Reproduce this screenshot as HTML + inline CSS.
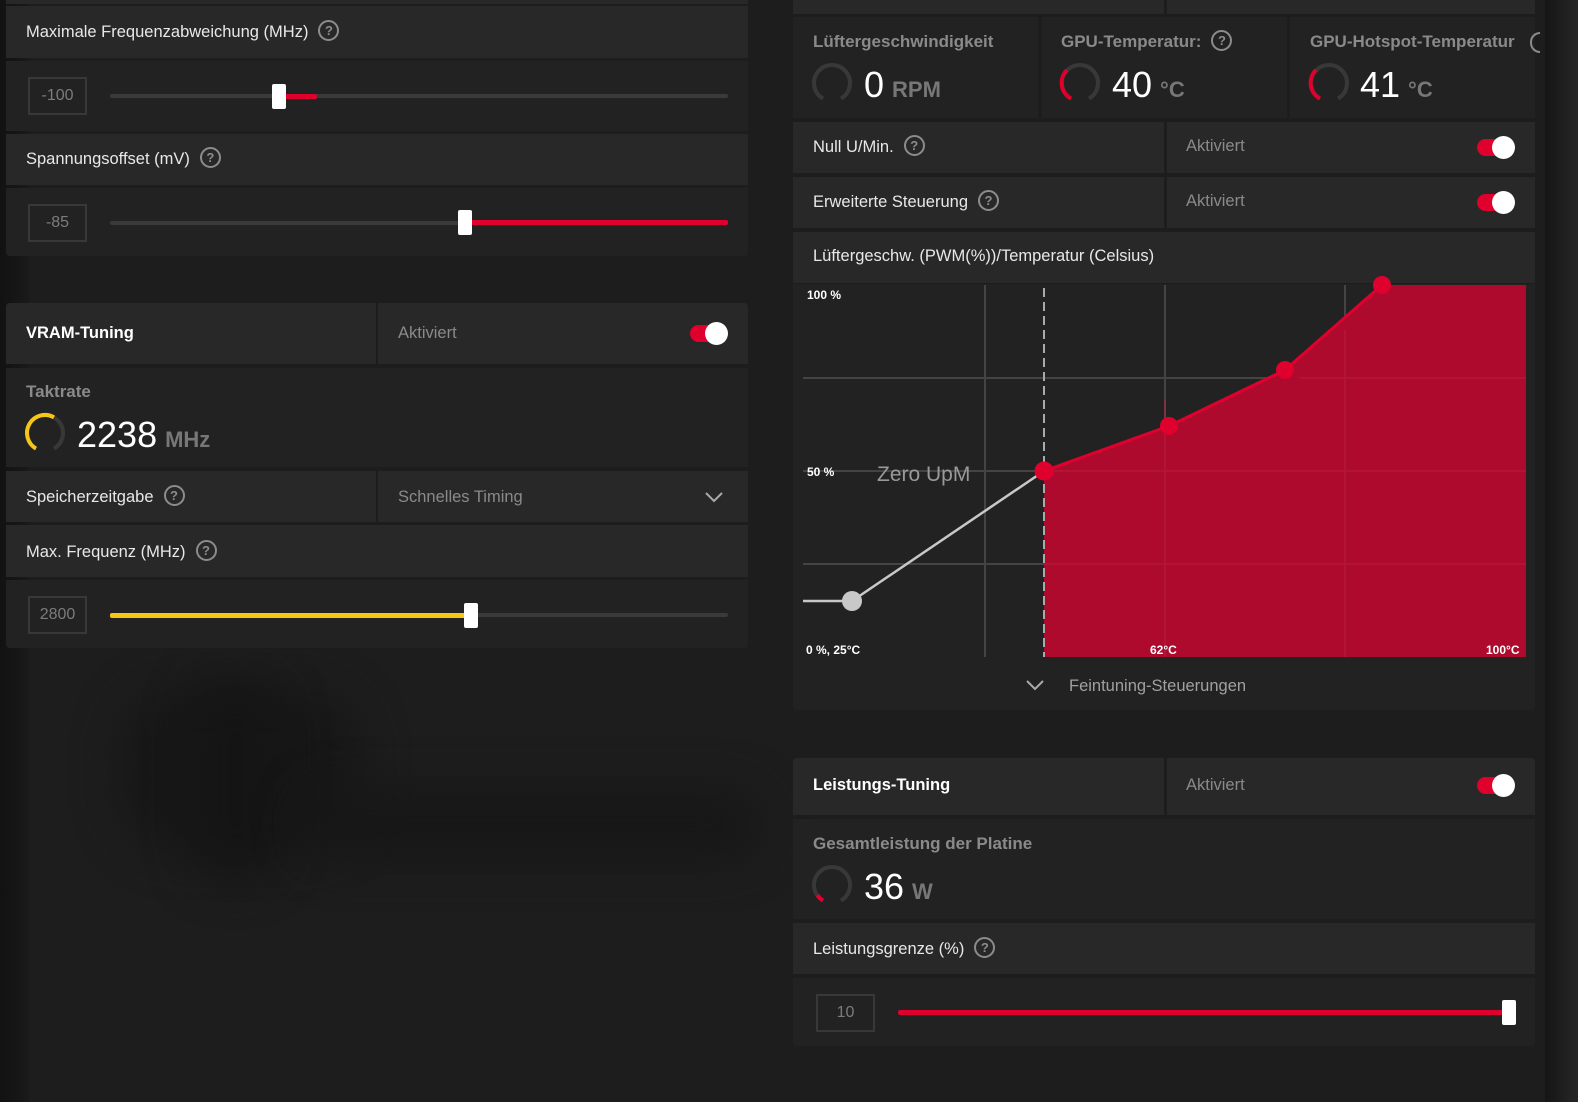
<!DOCTYPE html>
<html><head><meta charset="utf-8"><style>
*{margin:0;padding:0;box-sizing:border-box}
body{width:1578px;height:1102px;overflow:hidden;background:#1d1d1d;font-family:"Liberation Sans",sans-serif;position:relative}
.bgl{position:absolute;left:0;top:0;width:30px;height:1102px;background:linear-gradient(90deg,#121212,#171717 70%,#1b1b1b)}
.bgr{position:absolute;left:1545px;top:0;width:33px;height:1102px;background:linear-gradient(90deg,#151515,#202020 60%,#262626)}
.blob{position:absolute;border-radius:60px;filter:blur(22px);background:#171717}
.r{position:absolute}
.h{background:#282828}
.d{background:#222}
.t{position:absolute;color:#e8e8e8;font-size:16.5px;white-space:nowrap}
.g{color:#8a8a8a}
.b{font-weight:bold}
.q{display:inline-block;width:21px;height:21px;border:2px solid #8c8c8c;border-radius:50%;color:#8c8c8c;font-size:13px;font-weight:bold;text-align:center;line-height:17px;vertical-align:middle;margin-left:10px;position:relative;top:-2px}
.box{position:absolute;width:59px;height:38px;border:2px solid #383838;color:#7c7c7c;font-size:16px;text-align:center;line-height:34px}
.trk{position:absolute;height:4px;background:#3a3a3a;border-radius:2px}
.fill{position:absolute;height:5px;border-radius:2px}
.th{position:absolute;width:14px;height:25px;background:#fff;border-radius:2px}
.tg{position:absolute;width:34px;height:17px;background:#e0002d;border-radius:9px}
.tg:after{content:"";position:absolute;right:-4px;top:-3px;width:23px;height:23px;border-radius:50%;background:#fff}
.big{position:absolute;color:#fff;font-size:36px;white-space:nowrap}
.big span{color:#777;font-size:22px;font-weight:bold;margin-left:8px}
.st{font-size:17px}
</style></head><body>
<div class="bgl"></div><div class="bgr"></div>
<div class="blob" style="left:120px;top:690px;width:240px;height:160px"></div>
<div class="blob" style="left:190px;top:680px;width:90px;height:200px;background:#151515"></div>
<div class="blob" style="left:300px;top:790px;width:460px;height:70px"></div>

<!-- LEFT TOP PANEL -->
<div class="r h" style="left:6px;top:0;width:742px;height:4px"></div>
<div class="r h" style="left:6px;top:6px;width:742px;height:52px"></div>
<div class="t" style="left:26px;top:22px">Maximale Frequenzabweichung (MHz)<span class="q">?</span></div>
<div class="r d" style="left:6px;top:61px;width:742px;height:70px"></div>
<div class="box" style="left:28px;top:77px">-100</div>
<div class="trk" style="left:110px;top:94px;width:618px"></div>
<div class="fill" style="left:280px;top:94px;width:37px;background:#e0002d"></div>
<div class="th" style="left:272px;top:84px"></div>
<div class="r h" style="left:6px;top:134px;width:742px;height:51px"></div>
<div class="t" style="left:26px;top:149px">Spannungsoffset (mV)<span class="q">?</span></div>
<div class="r d" style="left:6px;top:188px;width:742px;height:68px;border-radius:0 0 4px 4px"></div>
<div class="box" style="left:28px;top:204px">-85</div>
<div class="trk" style="left:110px;top:221px;width:618px"></div>
<div class="fill" style="left:465px;top:220px;width:263px;background:#e0002d"></div>
<div class="th" style="left:458px;top:210px"></div>

<!-- VRAM PANEL -->
<div class="r h" style="left:6px;top:303px;width:370px;height:61px;border-radius:4px 0 0 0"></div>
<div class="r h" style="left:378px;top:303px;width:370px;height:61px;border-radius:0 4px 0 0"></div>
<div class="t b" style="left:26px;top:324px;color:#fff">VRAM-Tuning</div>
<div class="t g" style="left:398px;top:324px">Aktiviert</div>
<div class="tg" style="left:690px;top:325px"></div>
<div class="r d" style="left:6px;top:368px;width:742px;height:99px"></div>
<div class="t b st" style="left:26px;top:382px;color:#8a8a8a">Taktrate</div>
<svg class="r" style="left:21px;top:411px" width="48" height="46"><path d="M15 37.6 A18 18 0 1 1 33 37.6" fill="none" stroke="#383838" stroke-width="4"/><path d="M15 37.6 A18 18 0 1 1 33 6.4" fill="none" stroke="#f5c518" stroke-width="4"/></svg>
<div class="big" style="left:77px;top:414px">2238<span>MHz</span></div>
<div class="r h" style="left:6px;top:471px;width:370px;height:51px"></div>
<div class="r h" style="left:378px;top:471px;width:370px;height:51px"></div>
<div class="t" style="left:26px;top:487px">Speicherzeitgabe<span class="q">?</span></div>
<div class="t g" style="left:398px;top:488px">Schnelles Timing</div>
<svg class="r" style="left:704px;top:490px" width="20" height="14"><path d="M2 3 L10 11 L18 3" fill="none" stroke="#aaa" stroke-width="2"/></svg>
<div class="r h" style="left:6px;top:525px;width:742px;height:52px"></div>
<div class="t" style="left:26px;top:542px">Max. Frequenz (MHz)<span class="q">?</span></div>
<div class="r d" style="left:6px;top:580px;width:742px;height:68px;border-radius:0 0 4px 4px"></div>
<div class="box" style="left:28px;top:596px">2800</div>
<div class="trk" style="left:110px;top:613px;width:618px"></div>
<div class="fill" style="left:110px;top:613px;width:361px;background:#f5c518"></div>
<div class="th" style="left:464px;top:603px"></div>

<!-- RIGHT TOP PANEL -->
<div class="r h" style="left:793px;top:0;width:371px;height:14px"></div>
<div class="r h" style="left:1167px;top:0;width:368px;height:14px"></div>
<div class="r d" style="left:793px;top:17px;width:245px;height:101px"></div>
<div class="r d" style="left:1042px;top:17px;width:245px;height:101px"></div>
<div class="r d" style="left:1290px;top:17px;width:245px;height:101px"></div>
<div class="t b g st" style="left:813px;top:32px">Lüftergeschwindigkeit</div>
<div class="t b g st" style="left:1061px;top:32px">GPU-Temperatur:<span class="q">?</span></div>
<div class="t b g st" style="left:1310px;top:32px">GPU-Hotspot-Temperatur</div>
<div class="r" style="left:1530px;top:32px;width:10px;height:21px;border:2px solid #8c8c8c;border-right:none;border-radius:11px 0 0 11px"></div>
<svg class="r" style="left:808px;top:61px" width="48" height="46"><path d="M15 37.6 A18 18 0 1 1 33 37.6" fill="none" stroke="#383838" stroke-width="4"/></svg>
<div class="big" style="left:864px;top:64px">0<span>RPM</span></div>
<svg class="r" style="left:1056px;top:61px" width="48" height="46"><path d="M15 37.6 A18 18 0 1 1 33 37.6" fill="none" stroke="#383838" stroke-width="4"/><path d="M15 37.6 A18 18 0 0 1 11 9" fill="none" stroke="#e0002d" stroke-width="4"/></svg>
<div class="big" style="left:1112px;top:64px">40<span>°C</span></div>
<svg class="r" style="left:1305px;top:61px" width="48" height="46"><path d="M15 37.6 A18 18 0 1 1 33 37.6" fill="none" stroke="#383838" stroke-width="4"/><path d="M15 37.6 A18 18 0 0 1 11 9" fill="none" stroke="#e0002d" stroke-width="4"/></svg>
<div class="big" style="left:1360px;top:64px">41<span>°C</span></div>

<div class="r h" style="left:793px;top:122px;width:371px;height:51px"></div>
<div class="r h" style="left:1167px;top:122px;width:368px;height:51px"></div>
<div class="t" style="left:813px;top:137px">Null U/Min.<span class="q">?</span></div>
<div class="t g" style="left:1186px;top:137px">Aktiviert</div>
<div class="tg" style="left:1477px;top:139px"></div>
<div class="r h" style="left:793px;top:177px;width:371px;height:51px"></div>
<div class="r h" style="left:1167px;top:177px;width:368px;height:51px"></div>
<div class="t" style="left:813px;top:192px">Erweiterte Steuerung<span class="q">?</span></div>
<div class="t g" style="left:1186px;top:192px">Aktiviert</div>
<div class="tg" style="left:1477px;top:194px"></div>
<div class="r h" style="left:793px;top:232px;width:742px;height:51px"></div>
<div class="t" style="left:813px;top:247px">Lüftergeschw. (PWM(%))/Temperatur (Celsius)</div>
<div class="r d" style="left:793px;top:284px;width:742px;height:426px;border-radius:0 0 4px 4px"></div>
<svg class="r" style="left:0;top:0" width="1578" height="720">
<g stroke="#444" stroke-width="2">
<line x1="985" y1="285" x2="985" y2="657"/><line x1="1165" y1="285" x2="1165" y2="657"/><line x1="1345" y1="285" x2="1345" y2="657"/>
<line x1="803" y1="378" x2="1526" y2="378"/><line x1="803" y1="471" x2="1526" y2="471"/><line x1="803" y1="564" x2="1526" y2="564"/>
</g>
<polygon points="1044,471 1169,426 1285,370 1382,285 1526,285 1526,657 1044,657" fill="#ad0a2d"/>
<g stroke="#b8203f" stroke-width="1.5" opacity="0.6"><line x1="1165" y1="400" x2="1165" y2="657"/><line x1="1345" y1="330" x2="1345" y2="657"/><line x1="1300" y1="378" x2="1526" y2="378"/><line x1="1044" y1="471" x2="1526" y2="471"/><line x1="1044" y1="564" x2="1526" y2="564"/></g>
<line x1="1044" y1="288" x2="1044" y2="657" stroke="#aaa" stroke-width="2" stroke-dasharray="9,5"/>
<polyline points="803,601 852,601 1044,471" fill="none" stroke="#c8c8c8" stroke-width="2.5"/>
<polyline points="1044,471 1169,426 1285,370 1382,285" fill="none" stroke="#e0002d" stroke-width="3"/>
<circle cx="852" cy="601" r="10" fill="#c8c8c8"/>
<circle cx="1044" cy="471" r="9.5" fill="#e0002d"/><circle cx="1169" cy="426" r="9" fill="#e0002d"/><circle cx="1285" cy="370" r="9" fill="#e0002d"/><circle cx="1382" cy="285" r="9" fill="#e0002d"/>
<g font-family="Liberation Sans" font-size="12" font-weight="bold" fill="#fff">
<text x="807" y="299">100 %</text><text x="807" y="476">50 %</text><text x="806" y="654">0 %, 25°C</text><text x="1150" y="654">62°C</text><text x="1486" y="654">100°C</text>
</g>
<text x="877" y="481" font-family="Liberation Sans" font-size="21" fill="#999">Zero UpM</text>
<path d="M1027 681 L1035 689 L1043 681" fill="none" stroke="#aaa" stroke-width="2"/>
</svg>
<div class="t g" style="left:1069px;top:677px;color:#a0a0a0">Feintuning-Steuerungen</div>

<!-- LEISTUNG PANEL -->
<div class="r h" style="left:793px;top:758px;width:371px;height:57px;border-radius:4px 0 0 0"></div>
<div class="r h" style="left:1167px;top:758px;width:368px;height:57px;border-radius:0 4px 0 0"></div>
<div class="t b" style="left:813px;top:776px;color:#fff">Leistungs-Tuning</div>
<div class="t g" style="left:1186px;top:776px">Aktiviert</div>
<div class="tg" style="left:1477px;top:777px"></div>
<div class="r d" style="left:793px;top:819px;width:742px;height:100px"></div>
<div class="t b g st" style="left:813px;top:834px">Gesamtleistung der Platine</div>
<svg class="r" style="left:808px;top:863px" width="48" height="46"><path d="M15 37.6 A18 18 0 1 1 33 37.6" fill="none" stroke="#383838" stroke-width="4"/><path d="M15 37.6 A18 18 0 0 1 9.5 32" fill="none" stroke="#e0002d" stroke-width="4"/></svg>
<div class="big" style="left:864px;top:866px">36<span>W</span></div>
<div class="r h" style="left:793px;top:923px;width:742px;height:51px"></div>
<div class="t" style="left:813px;top:939px">Leistungsgrenze (%)<span class="q">?</span></div>
<div class="r d" style="left:793px;top:978px;width:742px;height:68px;border-radius:0 0 4px 4px"></div>
<div class="box" style="left:816px;top:994px">10</div>
<div class="fill" style="left:898px;top:1010px;width:612px;background:#e0002d"></div>
<div class="th" style="left:1502px;top:1000px"></div>
</body></html>
